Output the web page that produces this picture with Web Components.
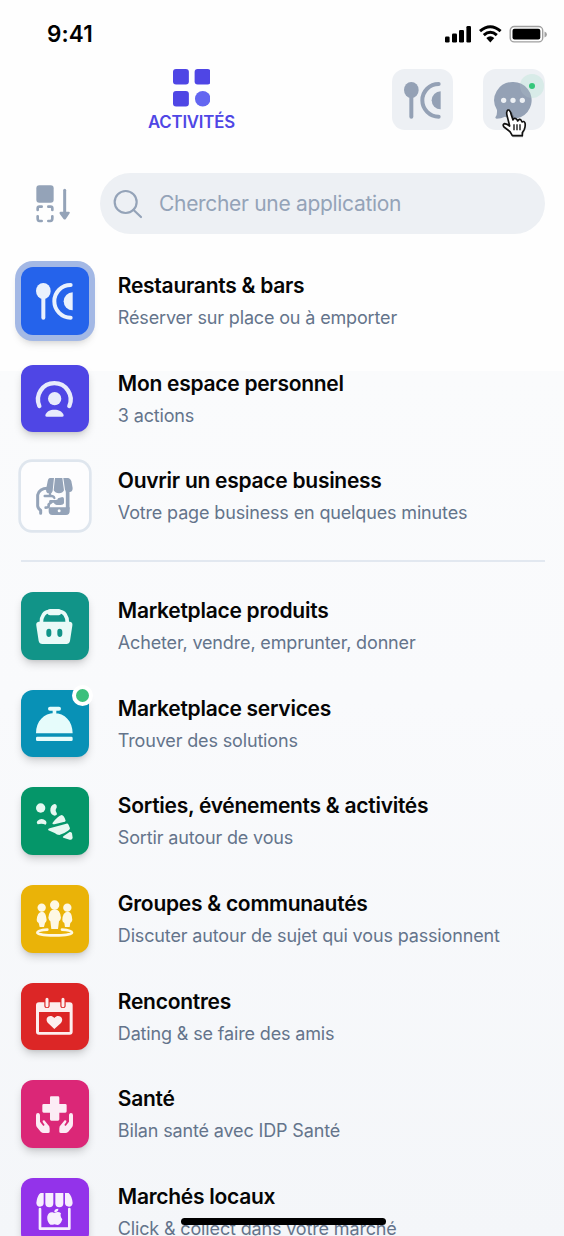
<!DOCTYPE html>
<html lang="fr">
<head>
<meta charset="utf-8">
<title>Activités</title>
<style>
html,body{margin:0;padding:0}
body{width:564px;height:1236px;overflow:hidden;font-family:Inter,"Liberation Sans",sans-serif;background:#fff}
</style>
</head>
<body>
<app-screen>
  <status-bar slot="status"></status-bar>
  <top-nav slot="nav"></top-nav>
  <search-bar slot="search">Chercher une application</search-bar>
  <app-row icon="food" color="#2563eb" tint="#eaf1fd" active><span slot="title">Restaurants &amp; bars</span><span slot="note">Réserver sur place ou à emporter</span></app-row>
  <app-row icon="person" color="#4f46e5" tint="#e8ebfc"><span slot="title">Mon espace personnel</span><span slot="note">3 actions</span></app-row>
  <app-row icon="business" outline tint="#94a3b8"><span slot="title">Ouvrir un espace business</span><span slot="note">Votre page business en quelques minutes</span></app-row>
  <list-divider></list-divider>
  <app-row icon="basket" color="#119488" tint="#eafaf8"><span slot="title">Marketplace produits</span><span slot="note">Acheter, vendre, emprunter, donner</span></app-row>
  <app-row icon="bell" color="#0891b6" tint="#e6fcfb" badge><span slot="title">Marketplace services</span><span slot="note">Trouver des solutions</span></app-row>
  <app-row icon="party" color="#059669" tint="#e6f8f1"><span slot="title">Sorties, événements &amp; activités</span><span slot="note">Sortir autour de vous</span></app-row>
  <app-row icon="group" color="#eab308" tint="#fef8e3"><span slot="title">Groupes &amp; communautés</span><span slot="note">Discuter autour de sujet qui vous passionnent</span></app-row>
  <app-row icon="calendar" color="#dc2626" tint="#fdeeee"><span slot="title">Rencontres</span><span slot="note">Dating &amp; se faire des amis</span></app-row>
  <app-row icon="health" color="#db2777" tint="#fcecf5"><span slot="title">Santé</span><span slot="note">Bilan santé avec IDP Santé</span></app-row>
  <app-row icon="market" color="#9333ea" tint="#f7effe"><span slot="title">Marchés locaux</span><span slot="note">Click &amp; collect dans votre marché</span></app-row>
</app-screen>
<script>
const S='fill="none" stroke="currentColor" stroke-linecap="round" stroke-linejoin="round"';
const HAND='M6 51C10 51 12 54 12 59V77L22 90L26 87L20 78Q18 72 25 73L36 86Q41 90 41 97V107Q41 111 36 111H23Q18 111 14 107L3 94Q0 90 0 83V58Q0 51 6 51Z';
const GLYPHS={
food:`<ellipse cx="22" cy="24" rx="22" ry="24"/><path d="M22 40V104" ${S} stroke-width="12"/><path d="M104 6A49 49 0 0 0 104 104" ${S} stroke-width="12"/><path d="M110 28V82A27 27 0 0 1 110 28Z"/>`,
person:`<path d="M10 78A49 49 0 1 1 100 78" ${S} stroke-width="13"/><circle cx="56" cy="56" r="20"/><path d="M32 110Q27 110 28 105C32 94 42 89 55 89S79 94 83 105Q84 110 79 110Z"/>`,
business:`<path d="M95 40V92" ${S} stroke-width="11" stroke-linecap="butt"/><path fill-rule="evenodd" d="M38 88H101V100Q101 111 90 111H49Q38 111 38 100ZM69.500 93.500A4.500 4.500 0 1 0 69.500 102.500A4.500 4.500 0 0 0 69.500 93.500Z"/><path d="M42 0H54L50 39Q49 46 42 46H35Q30 43 30 35L35 10Q37 0 42 0ZM57 0H79L84 37Q80 46 69 46T53 37ZM82 0H97Q103 1 106 9L110 30Q110 42 101 42H94Q88 41 87 35Z"/><path d="M37 31C19 30 7 39 5 51V84Q6 92 14 97V106" ${S} stroke-width="9"/><path d="M42 42V54M26 54H46Q53 54 55 60" ${S} stroke-width="7"/><path d="M43 66H60Q66 66 66 61L79 57Q85 58 84 64V76Q82 81 74 81H62Q56 80 53 74H43Q39 73 39 70T43 66Z"/><path d="M46 73Q42 75 38 79V84Q37 89 29 89" ${S} stroke-width="8"/>`,
basket:`<path d="M16 44C16 24 26 11 39 11H71C84 11 94 24 94 44" ${S} stroke-width="11"/><rect x="35" y="3" width="40" height="19" rx="7"/><path fill-rule="evenodd" d="M8 41H102Q111 43 109 53L102 99Q100 108 91 108H19Q10 108 8 99L1 53Q-1 43 8 41ZM39 62C34 62 31 66 31 71V78C31 90 46 90 46 78V71C46 66 44 62 39 62ZM71 62C66 62 64 66 64 71V78C64 90 79 90 79 78V71C79 66 76 62 71 62Z"/>`,
bell:`<rect x="36" y="5" width="39" height="12" rx="6"/><path d="M50 10H61V29H50ZM0 85C0 49 24 24 55 24S110 49 110 85Z"/><rect x="0" y="95" width="110" height="13" rx="4"/>`,
party:`<circle cx="14" cy="15" r="14"/><path d="M55 3Q42 8 43 23Q44 35 56 38Q65 37 62 30Q56 21 62 14Q64 4 55 3Z"/><path d="M4 54Q17 42 30 54Q34 61 29 65Q17 60 5 64Q0 60 4 54Z"/><path d="M77 36Q84 37 89 53Q88 57 83 57L55 64Q47 65 50 59Q67 38 77 36ZM41 76L91 62Q96 61 98 66L102 76Q102 80 96 83Q82 93 70 96Q63 96 56 90L37 82Q34 78 41 76ZM83 99L101 87Q106 86 108 91L110 104Q109 112 101 110L82 104Q78 102 83 99Z"/>`,
group:`<circle cx="56" cy="15" r="14"/><circle cx="17" cy="23" r="12.500"/><circle cx="94" cy="23" r="12.500"/><path d="M37 53Q40 28 56 28T75 53Q74 60 69 64L66 87H46L43 64Q38 60 37 53ZM2 60Q4 36 17 35T32 60Q31 66 27 69L24 81H11L8 69Q2 66 2 60ZM79 60Q80 36 94 35T109 60Q108 66 103 69L101 81H87L85 69Q79 66 79 60Z"/><path d="M34 89Q4 91 4 98C5 109 107 109 108 98Q107 91 78 89" ${S} stroke-width="8"/>`,
calendar:`<path fill-rule="evenodd" d="M9 13H25V23Q25 30 33 30T41 23V13H73V23Q73 30 81 30T89 23V13H101Q110 13 110 22V101Q110 110 101 110H9Q0 110 0 101V22Q0 13 9 13ZM9 42V102H101V42Z"/><path d="M33 4V23M81 4V23" ${S} stroke-width="9"/><path d="M55 93L36 75C23 60 43 45 55 60C67 45 87 60 75 75Z"/>`,
health:`<path d="M45 1H66Q70 1 70 5V24H88Q92 24 92 28V46Q92 50 88 50H70V70Q70 74 66 74H46Q42 74 42 70V50H23Q19 50 19 46V28Q19 24 23 24H42V5Q42 1 45 1Z"/><path d="${HAND}"/><path transform="translate(111 0) scale(-1 1)" d="${HAND}"/>`,
market:`<path d="M14 0H23V31Q22 41 12 41Q2 41 1 30Q3 12 10 3ZM28 0H52V31Q52 43 40 43T28 31ZM58 0H82V31Q82 43 70 43T58 31ZM87 0H98Q108 9 110 30Q109 41 99 41Q88 41 87 31Z"/><path d="M12 48V107H100V48" ${S} stroke-width="8"/><path d="M55 60Q67 54 75 61Q71 69 79 79Q74 95 65 96L55 94Q45 98 40 92Q32 83 34 70Q38 56 50 58ZM55 58Q53 48 67 47Q68 57 55 58Z"/>`,
chat:`<path fill-rule="evenodd" d="M55 0A55 55 0 1 1 30 104Q18 110 5 110Q-1 109 2 104Q7 98 6 84A55 55 0 0 1 55 0ZM26 47A8 8 0 1 0 26 63A8 8 0 0 0 26 47ZM54 47A8 8 0 1 0 54 63A8 8 0 0 0 54 47ZM82 47A8 8 0 1 0 82 63A8 8 0 0 0 82 47Z"/>`
};
const define=(name,html)=>customElements.define(name,class extends HTMLElement{
  constructor(){super();this.attachShadow({mode:'open'});}
  connectedCallback(){this.shadowRoot.innerHTML=typeof html==='function'?html(this):html;}
});
define('app-glyph',el=>`<style>:host{display:block;width:36.67px;height:36.67px}svg{display:block;width:100%;height:100%;overflow:visible;fill:currentColor}</style><svg viewBox="0 0 110 110">${GLYPHS[el.getAttribute('name')]}</svg>`);
define('app-screen',`<style>
:host{display:flex;flex-direction:column;position:relative;box-sizing:border-box;width:564px;height:1236px;overflow:hidden;background:linear-gradient(#fefefe 0 371px,#fafbfc 371px,#f9fafc 700px,#f4f6f9 1236px)}
.list{display:flex;flex-direction:column;gap:30.1px;padding:33.3px 19.5px 0 21px}
.home{position:absolute;left:181px;top:1218px;width:205px;height:7px;border-radius:4px;background:#000}
</style><slot name="status"></slot><slot name="nav"></slot><slot name="search"></slot><div class="list"><slot></slot></div><div class="home"></div>`);
define('status-bar',`<style>
:host{display:flex;align-items:center;justify-content:space-between;height:69px;flex:none;padding:0 17.5px 1px 47px;box-sizing:border-box}
.time{font-weight:600;font-size:22.5px;line-height:28px;letter-spacing:.1px;color:#000}
svg{display:block}
</style><span class="time">9:41</span>
<svg width="103" height="18" viewBox="0 0 103 18"><rect x="1" y="11.500" width="4.6" height="6" rx="1.3"/><rect x="8" y="8.500" width="5" height="9" rx="1.3"/><rect x="15" y="5" width="5" height="12.5" rx="1.3"/><rect x="22.4" y="1" width="4.6" height="16.5" rx="1.3"/>
<path d="M36 6.200Q46.300-2.600 56.600 6.200M39.800 10.200Q46.300 4.400 52.800 10.200" fill="none" stroke="#000" stroke-width="3"/><path d="M42.3 12.900Q46.3 9.600 50.3 12.900L46.3 17.400Z"/>
<rect x="66.2" y="1.500" width="32.5" height="15.4" rx="4" fill="none" stroke="#a0a0a0" stroke-width="1.4"/><rect x="68.5" y="3.800" width="27.8" height="10.8" rx="2"/><path d="M100.5 6.500Q103 7.500 103 9.500T100.5 12.500Z" fill="#a0a0a0"/></svg>`);
define('top-nav',`<style>
:host{display:flex;justify-content:space-between;height:61.5px;flex:none;padding:0 19.5px 0 148px;box-sizing:border-box}
.tab{display:flex;flex-direction:column;align-items:center;color:#4f46e5}
.tab svg{display:block;flex:none;margin-bottom:4px}
.tab span{font-weight:600;font-size:16.8px;line-height:22px;letter-spacing:-.2px;white-space:nowrap}
.actions{display:flex;gap:30px}
</style><div class="tab"><svg width="37.500" height="37.500" viewBox="0 0 111 111" fill="#4f46e5"><rect x="0" y="0" width="47" height="46" rx="9"/><rect x="64" y="0" width="47" height="46" rx="9"/><rect x="0" y="65" width="47" height="46" rx="9"/><circle cx="88" cy="88" r="23" fill="#6366f1"/></svg><span>ACTIVITÉS</span></div>
<div class="actions"><icon-button icon="food"></icon-button><icon-button icon="chat" notify></icon-button></div>`);
define('icon-button',el=>`<style>
:host{display:flex;position:relative;width:61.2px;height:61.2px;align-items:center;justify-content:center;border-radius:13px;background:#edf0f4;color:#94a1b5}
.halo{position:absolute;left:36.500px;top:5px;width:24px;height:24px;border-radius:50%;background:#d9ebe8;display:grid;place-items:center}
.halo i{width:6.4px;height:6.4px;border-radius:50%;background:#34c77b}
svg{position:absolute;left:18.5px;top:40px}
app-glyph{position:relative;left:-.5px;top:.5px}
.over{z-index:1}
div.over{background:#d4f1e420}
</style>${el.hasAttribute('notify')?'<div class="halo"></div>':''}<app-glyph name="${el.getAttribute('icon')}"></app-glyph>${el.hasAttribute('notify')?`<div class="halo over"><i></i></div>
<svg class="over" width="27" height="30" viewBox="0 0 81 90"><path transform="translate(2 4)" d="M21 8Q23 3 28 6L35 22L38 37Q40 31 46 34L49 38Q54 32 58 38L60 43Q66 38 68 45V58L61 73V81H31L24 70L9 56Q2 48 10 47L24 52L19 22Z" opacity=".25"/><path d="M15 7Q17 1 22 4Q26 7 28 18L33 33Q36 26 42 29Q46 31 47 36Q52 28 57 33L60 39Q66 35 69 42Q71 50 67 61L61 71V80H31L24 68L6 54Q0 46 8 44Q16 45 23 51L15 19Q13 11 15 7Z" fill="#fff" stroke="#111" stroke-width="5" stroke-linejoin="round"/><path d="M36 46V64M45 46V64M54 46V64" stroke="#111" stroke-width="4"/></svg>`:''}`);
define('search-bar',`<style>
:host{display:flex;align-items:center;justify-content:space-between;flex:none;padding:42.5px 19.5px 0 36px}
.field{display:flex;align-items:center;gap:16px;box-sizing:border-box;width:444.5px;height:61px;padding-left:13px;border-radius:31px;background:#edf0f4;color:#94a3b8;font-size:21px}
svg{display:block}
.field span{white-space:nowrap;letter-spacing:-.31px}
</style><svg width="35" height="38" viewBox="0 0 105 114" fill="#94a3b8"><rect x="1" y="1" width="52" height="52" rx="9"/><path d="M5 75V70Q5 65 10 65H17M37 65H44Q49 65 49 70V75M49 94V100Q49 108 43 108H37M17 108H10Q5 108 5 100V94" fill="none" stroke="#94a3b8" stroke-width="8" stroke-linecap="round"/><path d="M86 16V88" stroke="#94a3b8" stroke-width="9" stroke-linecap="round"/><path d="M73 80H99Q104 81 100 86L90 101Q86 106 82 101L71 86Q69 81 73 80Z"/></svg>
<div class="field"><svg width="30" height="30" viewBox="0 0 90 90" fill="none" stroke="#94a3b8" stroke-width="6.5" stroke-linecap="round"><circle cx="38" cy="39" r="33"/><path d="M61 62L84 84"/></svg><span><slot></slot></span></div>`);
define('list-divider',`<style>:host{display:block;height:2px;margin:.1px 0 0;background:#e2e8f0}</style>`);
define('app-row',el=>{const o=el.hasAttribute('outline'),a=el.hasAttribute('active');return `<style>
:host{display:flex;align-items:center;gap:29.3px;height:67.5px;flex:none}
.tile{--tile:${el.getAttribute('color')};position:relative;display:grid;place-items:center;width:67.5px;height:67.5px;flex:none;border-radius:12px;color:${el.getAttribute('tint')};
${o?'background:#fdfdfe;box-shadow:0 0 0 2.7px #dfe6ee;border-radius:11px':`background:var(--tile);box-shadow:${a?'0 0 0 6px #a3b8e5,':''}0 5px 9px -1px #0000002b,0 2px 4px -2px #00000020${a?',0 6px 9px 3px #0000001c':''}`}}
.badge{position:absolute;right:-4px;top:-5px;width:13px;height:13px;border:4.2px solid #fff;border-radius:50%;background:#3cc07c}
.text{display:flex;flex-direction:column;padding-top:1.4px;white-space:nowrap}
.title{font-weight:600;font-size:21px;line-height:32px;letter-spacing:-.27px;color:#050505}
.note{font-size:18px;line-height:31px;letter-spacing:-.15px;color:#64748b}
</style><div class="tile"><app-glyph name="${el.getAttribute('icon')}"></app-glyph>${el.hasAttribute('badge')?'<i class="badge"></i>':''}</div>
<div class="text"><div class="title"><slot name="title"></slot></div><div class="note"><slot name="note"></slot></div></div>`});
</script>
</body>
</html>
